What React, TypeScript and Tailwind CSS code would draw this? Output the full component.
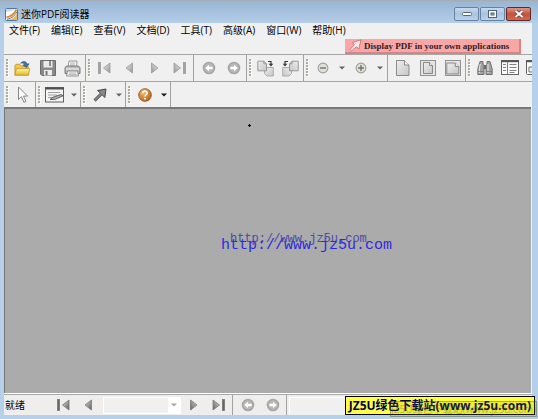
import React from "react";

const MENUS = ["文件(F)", "编辑(E)", "查看(V)", "文档(D)", "工具(T)", "高级(A)", "窗口(W)", "帮助(H)"];

function Grip() {
  return (
    <span className="flex w-1.5 shrink-0 justify-end pr-px" aria-hidden="true">
      <svg width="3" height="18" viewBox="0 0 3 18" shapeRendering="crispEdges">
        {[0, 3, 6, 9, 12, 15].map((y) => (
          <g key={y}>
            <rect x="1" y={y + 1} width="2" height="2" fill="#ffffff" />
            <rect x="0" y={y} width="2" height="2" fill="#aea999" />
          </g>
        ))}
      </svg>
    </span>
  );
}

function Tool({ label, children }: { label: string; children: React.ReactNode }) {
  return (
    <button type="button" aria-label={label} className="flex h-full w-[25px] shrink-0 items-center justify-center">
      {children}
    </button>
  );
}

function DropArrow({ label, dark = false }: { label: string; dark?: boolean }) {
  return (
    <button type="button" aria-label={label} className="flex h-full w-[13px] shrink-0 items-center justify-center">
      <svg width="6" height="4" viewBox="0 0 6 4">
        <path d="M0 0.5h6L3 3.6z" fill={dark ? "#151515" : "#626262"} />
      </svg>
    </button>
  );
}

function Group({ children }: { children: React.ReactNode }) {
  return <div className="flex shrink-0 items-center self-stretch border-r border-[#a2a2a2]">{children}</div>;
}

function Divider() {
  return (
    <span className="flex w-1 shrink-0 self-stretch pl-px">
      <span className="w-px bg-[#a2a2a2]" />
    </span>
  );
}

function Defs() {
  return (
    <svg width="0" height="0" className="absolute" aria-hidden="true">
      <defs>
        <linearGradient id="metal" x1="0" y1="0" x2="1" y2="1">
          <stop offset="0" stopColor="#e6e6e6" />
          <stop offset="1" stopColor="#969696" />
        </linearGradient>
        <linearGradient id="steel" x1="0" y1="0" x2="1" y2="1">
          <stop offset="0" stopColor="#dcdcdc" />
          <stop offset="1" stopColor="#5c5c5c" />
        </linearGradient>
        <linearGradient id="paper" x1="0" y1="0" x2="1" y2="1">
          <stop offset="0" stopColor="#eeeeee" />
          <stop offset="1" stopColor="#c6c6c6" />
        </linearGradient>
        <linearGradient id="gold" x1="0" y1="0" x2="0" y2="1">
          <stop offset="0" stopColor="#fdf3a0" />
          <stop offset="1" stopColor="#e8b92d" />
        </linearGradient>
        <radialGradient id="amber" cx="0.35" cy="0.3" r="0.8">
          <stop offset="0" stopColor="#f6bd6c" />
          <stop offset="1" stopColor="#b45a10" />
        </radialGradient>
      </defs>
    </svg>
  );
}

function AppIcon() {
  return (
    <svg width="13" height="13" viewBox="0 0 13 13">
      <rect x="0.5" y="0.5" width="12" height="12" rx="1" fill="#fff" stroke="#55759a" />
      <path d="M1 4C5 4 8 3 10 1H1z" fill="#c8dced" />
      <path d="M1.5 9.5C6 8.5 9.5 5.5 11.5 1.5" fill="none" stroke="#e38b28" strokeWidth="1.8" />
      <path d="M3 12C7 11.3 10 9 12 5.5V12z" fill="#efb65c" />
      <path d="M2 11.5C6.5 10.5 10 7.5 12 4" fill="none" stroke="#33577e" strokeWidth="0.8" />
    </svg>
  );
}

function FolderIcon() {
  return (
    <svg width="17" height="17" viewBox="0 0 18 17">
      <path d="M1 15.5V5.5L2 4h4l1.5 2H15v9.5z" fill="#f0ca48" stroke="#b98b18" strokeWidth="0.8" />
      <path d="M1 15.5L2.6 8.5H16.6l-1.2 7z" fill="url(#gold)" stroke="#bd9322" strokeWidth="0.8" />
      <path d="M7 3C9 0.2 13 0.4 14 3.8l2-.3-2.8 4-4-2.6 2-.4C10.5 2.6 9 2.2 7 3z" fill="#43749f" stroke="#28527a" strokeWidth="0.6" />
    </svg>
  );
}

function SaveIcon() {
  return (
    <svg width="16" height="16" viewBox="0 0 16 16">
      <path d="M0.5 0.5h15v15H2l-1.5-1.5z" fill="#898989" stroke="#6c6c6c" />
      <path d="M3.5 1h9v6.5h-9z" fill="#e9e9e9" />
      <path d="M10 1v5" stroke="#6d6d6d" strokeWidth="1.5" />
      <path d="M4 10h8v5.5H4z" fill="#eeeeee" />
      <path d="M5.5 11h2v4h-2z" fill="#757575" />
    </svg>
  );
}

function PrintIcon() {
  return (
    <svg width="17" height="17" viewBox="0 0 17 17">
      <path d="M4 7L5 1h8l-.5 6z" fill="#fafafa" stroke="#818181" strokeWidth="0.8" />
      <path d="M6.2 3h5M6 5h5" stroke="#969696" strokeWidth="0.8" />
      <path d="M1 7.5L3 6h11l2 1.5v6H1z" fill="#bdbdbd" stroke="#6e6e6e" strokeWidth="0.9" />
      <path d="M2 9h13" stroke="#f4f4f4" />
      <path d="M3.5 11h10l1 5h-12z" fill="#f2f2f2" stroke="#7b7b7b" strokeWidth="0.8" />
      <path d="M5 13h7M4.7 14.6h8" stroke="#9c9c9c" strokeWidth="0.7" />
    </svg>
  );
}

function NavIcon({ flip = false, bar = false, dark = false }: { flip?: boolean; bar?: boolean; dark?: boolean }) {
  const fill = dark ? "url(#steel)" : "url(#metal)";
  const edge = dark ? "#777777" : "#999999";
  return (
    <svg width="13" height="12" viewBox="0 0 13 12" className={flip ? "-scale-x-100" : ""}>
      {bar && <rect x="0.5" y="0.5" width="2" height="11" fill={dark ? "#666666" : "#a2a2a2"} stroke={edge} strokeWidth="0.8" />}
      <path d={bar ? "M12 1v10L5.5 6z" : "M9.5 1v10L3 6z"} fill={fill} stroke={edge} strokeWidth="0.8" />
    </svg>
  );
}

function CircleArrow({ flip = false }: { flip?: boolean }) {
  return (
    <svg width="14" height="14" viewBox="0 0 14 14" className={flip ? "-scale-x-100" : ""}>
      <circle cx="7" cy="7" r="5.5" fill="#b8b8b8" stroke="#a6a6a6" strokeWidth="1.6" />
      <path d="M3.2 7L7 3.8v2h3.6v2.4H7v2z" fill="#ffffff" />
    </svg>
  );
}

function RotateIcon({ flip = false }: { flip?: boolean }) {
  return (
    <svg width="17" height="17" viewBox="0 0 17 17" className={flip ? "-scale-x-100" : ""}>
      <path d="M7.5 7.5h8.8V16H10l-2.5-2.5z" fill="url(#paper)" stroke="#a6a6a6" strokeWidth="0.9" />
      <path d="M0.8 1.2h6l2.7 2.6v7H0.8z" fill="url(#paper)" stroke="#909090" strokeWidth="0.9" />
      <path d="M6.8 1.2v2.6h2.7" fill="none" stroke="#909090" strokeWidth="0.8" />
      <path d="M11 1.5h3v3" fill="none" stroke="#373737" strokeWidth="1.2" />
      <path d="M11.7 3.8h4.6L14 6.4z" fill="#373737" />
    </svg>
  );
}

function ZoomIcon({ plus = false }: { plus?: boolean }) {
  return (
    <svg width="12" height="12" viewBox="0 0 12 12">
      <circle cx="6" cy="6" r="4.9" fill="#e0e0da" stroke="#a0a098" strokeWidth="1.1" />
      <path d={plus ? "M3 6h6M6 3v6" : "M3 6h6"} stroke="#73736c" strokeWidth="1.4" />
    </svg>
  );
}

function PageIcon({ kind }: { kind: "actual" | "page" | "width" }) {
  if (kind === "actual") {
    return (
      <svg width="14" height="16" viewBox="0 0 14 16">
        <path d="M0.5 0.5h8L13 5v10.5H0.5z" fill="url(#paper)" stroke="#8b8b8b" />
        <path d="M8.5 0.5V5H13" fill="#f5f5f5" stroke="#8b8b8b" />
      </svg>
    );
  }
  return (
    <svg width="16" height="16" viewBox="0 0 16 16">
      <rect x="0.5" y="0.5" width="15" height="15" fill="#e5e5e5" stroke="#929292" />
      <path d={kind === "page" ? "M3.5 2.5h6l3 3v8h-9z" : "M1.8 3h8.5l3.5 3.5V14h-12z"} fill="url(#paper)" stroke="#898989" />
      <path d={kind === "page" ? "M9.5 2.5v3h3" : "M10.3 3v3.5h3.5"} fill="#f6f6f6" stroke="#898989" />
    </svg>
  );
}

function BinocularsIcon() {
  return (
    <svg width="16" height="16" viewBox="0 0 16 16">
      <path d="M3 1.5h3V4l1 2v8.5H0.8V9z" fill="#a2a2a2" stroke="#666666" strokeWidth="0.9" />
      <path d="M13 1.5h-3V4L9 6v8.5h6.2V9z" fill="#a2a2a2" stroke="#666666" strokeWidth="0.9" />
      <path d="M7 5h2v4H7z" fill="#6c6c6c" />
      <path d="M3.2 4L2.3 9v4M11 4v9" stroke="#e6e6e6" strokeWidth="1.1" fill="none" />
      <path d="M1 11.5h6M9 11.5h6" stroke="#777777" strokeWidth="0.8" />
    </svg>
  );
}

function ListIcon() {
  return (
    <svg width="18" height="16" viewBox="0 0 18 16">
      <rect x="0.5" y="0.5" width="17" height="14" fill="#fafafa" stroke="#666666" />
      <path d="M0 1.2h18" stroke="#565656" strokeWidth="2" />
      <path d="M6.5 2v12" stroke="#808080" />
      <path d="M2 4.5h3M2 7.5h3M2 10.5h3M8.5 4.5h7M8.5 7.5h7M8.5 10.5h7M8.5 12.5h5" stroke="#838383" />
    </svg>
  );
}

function PanelIcon() {
  return (
    <svg width="18" height="16" viewBox="0 0 18 16">
      <rect x="0.5" y="0.5" width="17" height="14" rx="1" fill="#fafafa" stroke="#606060" />
      <path d="M0 1.2h18" stroke="#555555" strokeWidth="2" />
      <path d="M3 12V7h12v5z" fill="#eeeeee" stroke="#707070" />
    </svg>
  );
}

function CursorIcon() {
  return (
    <svg width="12" height="18" viewBox="0 0 12 18">
      <path d="M1.5 1v12.5l3-2.8 2.4 5.6 2-.9-2.4-5.3h4z" fill="#fdfdfd" stroke="#777777" strokeWidth="0.9" />
    </svg>
  );
}

function NoteIcon() {
  return (
    <svg width="20" height="16" viewBox="0 0 20 16">
      <rect x="0.5" y="0.5" width="18" height="14.5" fill="#f4f4f4" stroke="#606060" />
      <path d="M0 1.5h19" stroke="#505050" strokeWidth="2" />
      <path d="M3 5.5h12M3 8h9M3 10.5h4" stroke="#9e9e9e" />
      <path d="M5 12.5l3-2.3L16 7.5l2 1.3-8 3.5z" fill="#b5b5b5" stroke="#505050" strokeWidth="0.9" />
    </svg>
  );
}

function ArrowIcon() {
  return (
    <svg width="14" height="14" viewBox="0 0 14 14">
      <path d="M1 11.5L7.5 5 4.5 2.5 13 1l-1.2 8.5-2.7-2.8L2.7 13z" fill="#8a8a8a" stroke="#444444" strokeWidth="1" />
    </svg>
  );
}

function HelpIcon() {
  return (
    <svg width="14" height="14" viewBox="0 0 14 14">
      <circle cx="7" cy="7" r="6.3" fill="url(#amber)" stroke="#8e5726" strokeWidth="0.9" />
      <path d="M4.8 5.3C4.9 2.4 9.3 2.5 9.2 5.2 9.1 6.6 7 6.8 7 8.5" fill="none" stroke="#fff" strokeWidth="1.6" />
      <circle cx="7" cy="10.7" r="1" fill="#fff" />
    </svg>
  );
}

function CaptionButton({ label, close = false, children }: { label: string; close?: boolean; children: React.ReactNode }) {
  const skin = close
    ? "border-[#63282a] bg-linear-to-b from-[#dc9588] via-[#c4513c] to-[#cf6a4c]"
    : "border-[#6583a5] bg-linear-to-b from-[#c7daed] via-[#a9c3df] to-[#bbd3ea]";
  return (
    <button
      type="button"
      aria-label={label}
      className={`flex h-3.5 w-[25px] items-center justify-center rounded-xs border ${skin}`}
    >
      {children}
    </button>
  );
}

export default function App() {
  return (
    <div className="relative flex h-screen w-full flex-col overflow-hidden border-t border-[#a5adb5] bg-[#b5d0e8] pr-1.5 pb-1 pl-1 font-['Open_Sans','Noto_Sans_CJK_SC',sans-serif] text-[10px] leading-3 text-black">
      <Defs />
      <header className="-mr-1.5 -ml-1 flex h-[22px] shrink-0 items-center bg-linear-to-b from-[#98b5d3] to-[#b5cee8] pt-1 pr-[7px] pl-[5px]">
        <AppIcon />
        <h1 className="ml-[3px] flex-1">迷你PDF阅读器</h1>
        <div className="flex gap-px">
          <CaptionButton label="最小化">
            <svg width="10" height="5" viewBox="0 0 10 5">
              <rect x="0.5" y="0.5" width="9" height="3" rx="1" fill="#fff" stroke="#59677a" />
            </svg>
          </CaptionButton>
          <CaptionButton label="最大化">
            <svg width="9" height="8" viewBox="0 0 9 8">
              <rect x="0.5" y="0.5" width="8" height="7" fill="#fff" stroke="#53647a" />
              <rect x="3" y="3" width="3" height="2" fill="#8ba5c4" stroke="#53647a" />
            </svg>
          </CaptionButton>
          <CaptionButton label="关闭" close>
            <svg width="10" height="8" viewBox="0 0 10 8">
              <path d="M1.5 1l7 6M8.5 1l-7 6" stroke="#64383a" strokeWidth="3.4" />
              <path d="M1.5 1l7 6M8.5 1l-7 6" stroke="#fff" strokeWidth="2" />
            </svg>
          </CaptionButton>
        </div>
      </header>

      <div className="flex min-h-0 flex-1 flex-col bg-[#f0f0f0]">
        <nav className="flex h-4 shrink-0 items-center gap-[11px] pl-[5px]">
          {MENUS.map((m) => (
            <button key={m} type="button" className="h-3 shrink-0 -translate-y-px whitespace-nowrap">
              {m}
            </button>
          ))}
        </nav>
        <div className="flex h-[15px] shrink-0 justify-end pr-[11px]">
          <a
            href="#sdk"
            className="flex h-[15px] w-44 items-center gap-0.5 border-r-2 border-b-2 border-[#d58588] bg-[#f9a6a6] pl-1 font-['Liberation_Serif',serif] text-[9px] font-bold whitespace-nowrap text-[#332023]"
          >
            <svg width="13" height="13" viewBox="0 0 13 13" className="shrink-0">
              <path d="M12 0.8L9.8 10 7.5 7.7 2.5 12 1 10.5l4.5-4.8L3.5 3.6z" fill="#fce9e9" stroke="#b96a70" strokeWidth="0.8" />
            </svg>
            Display PDF in your own applications
          </a>
        </div>

        <div className="flex h-[27px] shrink-0 overflow-hidden border-t border-[#a6a6a6]">
          <Group>
            <Grip />
            <Tool label="打开"><FolderIcon /></Tool>
            <Tool label="保存"><SaveIcon /></Tool>
            <Tool label="打印"><PrintIcon /></Tool>
          </Group>
          <Group>
            <Grip />
            <Tool label="第一页"><NavIcon bar /></Tool>
            <Tool label="上一页"><NavIcon /></Tool>
            <Tool label="下一页"><NavIcon flip /></Tool>
            <Tool label="最后一页"><NavIcon bar flip /></Tool>
            <Divider />
            <Tool label="后退"><CircleArrow /></Tool>
            <Tool label="前进"><CircleArrow flip /></Tool>
          </Group>
          <Group>
            <Grip />
            <Tool label="顺时针旋转"><RotateIcon /></Tool>
            <Tool label="逆时针旋转"><RotateIcon flip /></Tool>
          </Group>
          <Group>
            <Grip />
            <Tool label="缩小"><ZoomIcon /></Tool>
            <DropArrow label="缩小选项" />
            <Tool label="放大"><ZoomIcon plus /></Tool>
            <DropArrow label="放大选项" />
            <Divider />
            <Tool label="实际大小"><PageIcon kind="actual" /></Tool>
            <Tool label="适合页面"><PageIcon kind="page" /></Tool>
            <Tool label="适合宽度"><PageIcon kind="width" /></Tool>
          </Group>
          <div className="flex shrink-0 items-center">
            <Grip />
            <Tool label="查找"><BinocularsIcon /></Tool>
            <Tool label="书签"><ListIcon /></Tool>
            <Tool label="面板"><PanelIcon /></Tool>
          </div>
        </div>

        <div className="flex h-[26px] shrink-0 border-t border-[#a6a6a6]">
          <Group>
            <Grip />
            <Tool label="选择"><CursorIcon /></Tool>
          </Group>
          <Group>
            <Grip />
            <Tool label="注释"><NoteIcon /></Tool>
            <DropArrow label="注释选项" />
          </Group>
          <Group>
            <Grip />
            <Tool label="箭头"><ArrowIcon /></Tool>
            <DropArrow label="箭头选项" />
          </Group>
          <Group>
            <Grip />
            <Tool label="帮助"><HelpIcon /></Tool>
            <DropArrow label="帮助选项" dark />
          </Group>
        </div>

        <main className="relative mr-px min-h-0 flex-1 overflow-hidden border-t-2 border-l border-t-[#777777] border-l-[#777777] bg-[#ababab] font-['Liberation_Mono',monospace]">
          <svg width="3" height="3" viewBox="0 0 3 3" className="absolute top-[15px] left-[243px]">
            <path d="M1 0h1v1h1v1H2v1H1V2H0V1h1z" fill="#000" />
          </svg>
          <p className="absolute top-[122px] left-[225px] text-[12px] leading-4 text-[#4a4aa8]">http://www.jz5u.com</p>
          <p className="absolute top-[129px] left-[216px] text-[15px] leading-4 text-[#2b2bdc]">http://www.jz5u.com</p>
        </main>

        <footer className="flex h-[22px] shrink-0 items-center border-t border-white bg-[#f0eeed]">
          <div className="flex h-full w-full items-center border-t border-[#a8a8a8]">
            <span className="w-[47px] shrink-0 pl-px">就绪</span>
            <Tool label="第一页"><NavIcon bar dark /></Tool>
            <Tool label="上一页"><NavIcon dark /></Tool>
            <div className="relative ml-0.5 h-[17px] w-[78px] shrink-0 border border-white bg-[#f1f0f0]">
              <select aria-label="页码" disabled className="h-full w-full appearance-none">
                <option></option>
              </select>
              <span className="pointer-events-none absolute inset-y-0 right-0 flex w-3 items-center justify-center bg-white">
                <svg width="6" height="4" viewBox="0 0 6 4">
                  <path d="M0 0.5h6L3 3.6z" fill="#a5a5a5" />
                </svg>
              </span>
            </div>
            <Tool label="下一页"><NavIcon flip dark /></Tool>
            <Tool label="最后一页"><NavIcon flip bar dark /></Tool>
            <Divider />
            <Tool label="后退"><CircleArrow /></Tool>
            <Tool label="前进"><CircleArrow flip /></Tool>
            <Divider />
            <div className="h-[17px] min-w-0 flex-1 border-t border-l border-white bg-[#f0f0f0]" />
          </div>
        </footer>
      </div>

      <p className="absolute right-[3px] bottom-1 flex h-[19px] items-center border border-black bg-[#ffff45] px-[3px] text-[12px] leading-4 font-bold whitespace-nowrap text-[#000050]">
        JZ5U绿色下载站(www.jz5u.com)
      </p>
      <p className="absolute right-px bottom-0.5 flex h-4 items-center border border-[#3e3e00] bg-[#8a8a00]/40 text-[10px] leading-3 whitespace-nowrap text-[#4a4a20] opacity-40">
        JZ5U绿色下载站(www.jz5u.com)
      </p>
    </div>
  );
}
